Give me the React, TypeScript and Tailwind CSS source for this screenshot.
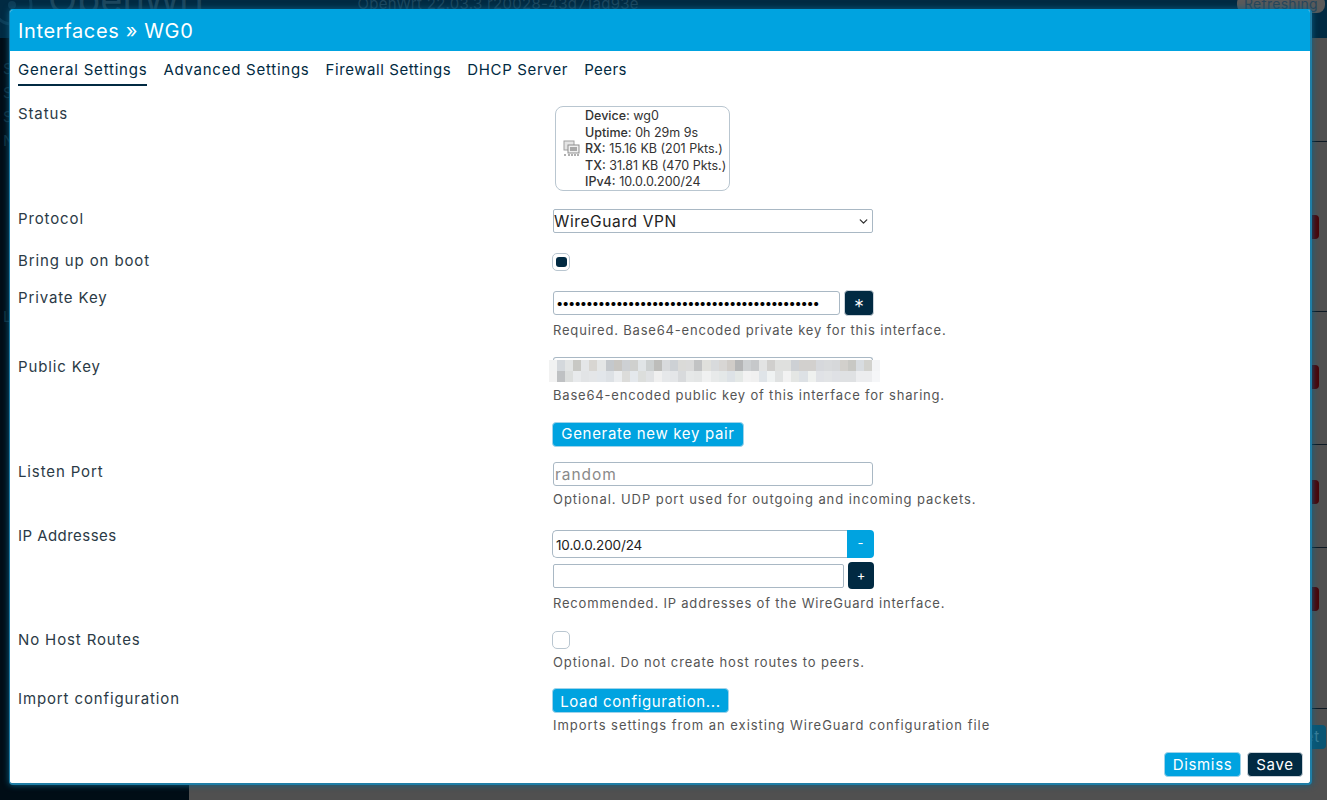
import React from 'react'
import { ChevronDown } from 'lucide-react'

const font = { fontFamily: 'Inter, "Noto Sans", sans-serif' }

const blurTop = ['#f1f2f2','#d4d8dc','#e2e4e4','#c8c8c4','#e4e6e8','#d8d6d2','#e4e6e6','#c4c8cc','#c8c6c2','#cdd0d3','#cfd0ce','#e0e4e6','#ccd0d0','#bdbdba','#d8dadc','#cdd1d5','#dadad8','#dadada','#c2c3c4','#e0e0dc','#d8dadc','#d8d6d4','#d0ccc8','#b4b5b6','#cdd0d2','#c6c8ca','#e2e3e3','#d0cfcd','#dfe0de','#dfe0de','#cdd0d4','#d2d0ce','#d2d0ce','#d6d8dc','#d8dadc','#d6d8da','#d2d0cc','#c8c8c4','#d8dce0','#d2d2ce','#f3f4f6']
const blurBottom = ['#f2f2f2','#bfc1c3','#dcdedd','#e8eaec','#e2e4e6','#e4e6e8','#e2e6ea','#dde1e5','#ebedef','#dcdcda','#e4e8ec','#dcdedc','#e0e2e4','#f0f0f0','#e6e8ea','#e4e6e8','#d8dadc','#e6e8e8','#e4e6e6','#f0f1f1','#e8eaea','#e4e8e8','#dde2e6','#e4e8e6','#f2f2f2','#f0f0f0','#dfe4e8','#eff2f2','#e0e2e2','#f2f2f2','#e4e6e4','#dde1e5','#eff1ef','#e0e2e6','#e2e4e6','#dfe1e5','#dfe1e3','#dfe1e3','#ecedef','#ecedef','#f5f6f8']

type RowProps = { label?: React.ReactNode, labelClass?: string, className?: string, children: React.ReactNode }

function Row({ label, labelClass, className, children }: RowProps) {
  return (
    <div className={`flex ${className ?? ''}`}>
      <div className={`w-[535px] shrink-0 text-[15px] leading-5 tracking-[0.058em] text-[#2b3a46] ${labelClass ?? ''}`}>{label}</div>
      <div className="flex-1">{children}</div>
    </div>
  )
}

function Help({ children, className }: { children: React.ReactNode, className?: string }) {
  return <div className={`h-5 text-[13px] leading-5 tracking-[0.062em] text-[#555] ${className ?? 'mt-1'}`}>{children}</div>
}

function BlueButton({ children, className }: { children: React.ReactNode, className?: string }) {
  return (
    <button className={`-ml-px flex h-[25px] items-center justify-center rounded-[4px] border border-[#9fd3ea] bg-[#00a3e0] text-[15px] tracking-[0.045em] text-white ${className ?? ''}`}>
      {children}
    </button>
  )
}

function DeviceIcon() {
  return (
    <svg width="17" height="17" viewBox="0 0 17 17" className="shrink-0">
      <rect x="1" y="1" width="10" height="9" fill="#e4e4e4" stroke="#a0a0a0" />
      <rect x="5" y="5" width="11" height="8" fill="#f0f0f0" stroke="#8e8e8e" />
      <rect x="7" y="7" width="7" height="4" fill="#a8a8a8" />
      <path d="M1 15h2M5 15h11" stroke="#b0b0b0" strokeWidth="2" strokeDasharray="2 1" />
    </svg>
  )
}

function Backdrop() {
  return (
    <div className="flex h-screen w-full flex-col overflow-hidden bg-[#505050]">
      <div className="flex h-[38px] shrink-0 items-start overflow-hidden bg-[#012a42] text-[#1d475e]">
        <svg width="40" height="40" viewBox="0 0 40 40" className="-mt-[5px] -ml-[5px] shrink-0">
          <circle cx="17" cy="10" r="19" fill="none" stroke="#0d3d57" strokeWidth="3" />
          <circle cx="17" cy="10" r="4" fill="#0d3d57" />
        </svg>
        <span className="-mt-[23px] ml-[13px] text-[38px] leading-[44px]">OpenWrt</span>
        <span className="-mt-[6px] ml-[151px] text-[15px] leading-5 tracking-[0.02em]">OpenWrt 22.03.3 r20028-43d71ad93e</span>
        <span className="-mt-[5px] ml-auto mr-[2px] rounded-[8px] bg-[#5a5a5a] px-[7px] text-[14px] leading-[18px] tracking-[0.02em] text-[#27465a]">Refreshing</span>
      </div>
      <div className="flex min-h-0 flex-1">
        <div className="w-[189px] shrink-0 bg-[#000d16] pt-[19px] pl-[3px] text-[15px] leading-[24px] text-[#12303f]">
          <div>Status</div>
          <div>System</div>
          <div>Services</div>
          <div>Network</div>
          <div className="mt-[152px]">Logout</div>
        </div>
        <div className="flex flex-1 flex-col">
          <div className="h-[104px] border-b border-[#0d1a24]" />
          <div className="flex h-[170px] items-start justify-end border-b border-[#0d1a24] pt-[73px] pr-[8px]">
            <span className="h-[24px] w-[16px] rounded-[4px] bg-[#4a0508]" />
          </div>
          <div className="flex h-[133px] items-start justify-end border-b border-[#0d1a24] pt-[53px] pr-[8px]">
            <span className="h-[24px] w-[16px] rounded-[4px] bg-[#4a0508]" />
          </div>
          <div className="flex h-[103px] items-start justify-end border-b border-[#0d1a24] pt-[35px] pr-[8px]">
            <span className="h-[24px] w-[16px] rounded-[4px] bg-[#4a0508]" />
          </div>
          <div className="flex h-[161px] items-start justify-end border-b border-[#0d1a24] pt-[39px] pr-[8px]">
            <span className="h-[24px] w-[16px] rounded-[4px] bg-[#4a0508]" />
          </div>
          <div className="flex justify-end pt-[16px] pr-px">
            <span className="flex h-[24px] w-[60px] items-center justify-end rounded-[4px] bg-[#0a5573] pr-[6px] text-[15px] tracking-[0.05em] text-[#3c7f99]">Reset</span>
          </div>
        </div>
      </div>
    </div>
  )
}

export default function App() {
  return (
    <div className="relative h-screen w-full overflow-hidden" style={font}>
      <Backdrop />
      <div className="absolute top-[9px] left-[9px] flex h-[776px] w-[1303px] flex-col overflow-hidden rounded-[4px] border border-r-2 border-b-2 border-[#1f7ea6] border-t-[#00a3e0] bg-white shadow-[0_0_6px_#0a5f85]">
        <div className="flex h-[41px] shrink-0 items-center bg-[#00a3e0] pl-[8px] text-[20px] tracking-[0.032em] text-white">
          Interfaces » WG0
        </div>
        <div className="flex h-[35px] shrink-0 gap-4 pl-[8px] text-[15px] text-[#012a42]">
          <div className="h-[35px] border-b-2 border-[#012a42] pt-[9px] leading-5 tracking-[0.052em]">General Settings</div>
          <div className="pt-[9px] leading-5 tracking-[0.05em]">Advanced Settings</div>
          <div className="pt-[9px] leading-5 tracking-[0.038em]">Firewall Settings</div>
          <div className="pt-[9px] leading-5 tracking-[0.045em]">DHCP Server</div>
          <div className="pt-[9px] leading-5 tracking-[0.03em]">Peers</div>
        </div>

        <div className="mt-5 flex flex-1 flex-col pl-[8px]">
          <Row label="Status" labelClass="-mt-[2px]" className="mb-[18px]">
            <div className="ml-[2px] flex h-[85px] w-[175px] items-center gap-[5px] rounded-[8px] border border-[#b9c6d0] pl-[7px]">
              <DeviceIcon />
              <div className="pt-[2px] text-[12.5px] leading-[16.4px] whitespace-nowrap text-[#333]">
                <div><b className="font-medium">Device:</b> wg0</div>
                <div><b className="font-medium">Uptime:</b> 0h 29m 9s</div>
                <div><b className="font-medium">RX:</b> 15.16 KB (201 Pkts.)</div>
                <div><b className="font-medium">TX:</b> 31.81 KB (470 Pkts.)</div>
                <div><b className="font-medium">IPv4:</b> 10.0.0.200/24</div>
              </div>
            </div>
          </Row>

          <Row label="Protocol" className="mb-5">
            <div className="relative h-6 w-[320px]">
              <select className="h-6 w-full appearance-none rounded-[2px] border border-[#a9b8c4] text-[15.5px] tracking-[0.04em] text-[#222]" defaultValue="wg">
                <option value="wg">WireGuard VPN</option>
              </select>
              <ChevronDown size={13} strokeWidth={2.5} className="absolute top-[6px] right-[3px] text-[#333]" />
            </div>
          </Row>

          <Row label="Bring up on boot" labelClass="-mt-[2px]" className="mb-[19px]">
            <div className="-ml-px flex h-[18px] w-[18px] items-center justify-center rounded-[5px] border border-[#b9c6d0]">
              <span className="h-[10px] w-[11px] rounded-[3px] bg-[#012a42]" />
            </div>
          </Row>

          <Row label="Private Key" labelClass="-mt-[2px]" className="mb-[17px]">
            <div className="flex h-[26px] items-center gap-1">
              <input type="password" readOnly value="xxxxxxxxxxxxxxxxxxxxxxxxxxxxxxxxxxxxxxxxxxxx" className="h-[24px] w-[287px] rounded-[3px] border border-[#a9b8c4] pl-[2px] text-[13px] tracking-[-1.35px] text-black" />
              <button className="flex h-[26px] w-[30px] items-center justify-center rounded-[4px] border border-[#cbd3da] bg-[#012a42] text-[20px] leading-none font-light text-white">
                <span className="mt-[7px]">*</span>
              </button>
            </div>
            <Help>Required. Base64-encoded private key for this interface.</Help>
          </Row>

          <Row label="Public Key" className="mb-[17px]">
            <div className="relative h-6 w-[320px] rounded-[3px] border-x border-t border-[#a9b8c4]">
              <div className="absolute top-[2px] -left-[5px] w-[331px]">
                <div className="flex h-[11px]">
                  {blurTop.map((c, i) => <span key={i} className="h-full flex-1" style={{ backgroundColor: c }} />)}
                </div>
                <div className="flex h-[11px]">
                  {blurBottom.map((c, i) => <span key={i} className="h-full flex-1" style={{ backgroundColor: c }} />)}
                </div>
              </div>
            </div>
            <Help>Base64-encoded public key of this interface for sharing.</Help>
          </Row>

          <Row className="mb-[15px]">
            <BlueButton className="w-[192px]">Generate new key pair</BlueButton>
          </Row>

          <Row label="Listen Port" className="mb-[21px]">
            <input readOnly placeholder="random" className="h-6 w-[320px] rounded-[3px] border border-[#a9b8c4] pt-px pl-[1px] text-[15.5px] tracking-[0.06em] placeholder:text-[#8a8a8a]" />
            <Help className="mt-[3px]"><span className="tracking-[0.072em]">Optional. UDP port used for outgoing and incoming packets.</span></Help>
          </Row>

          <Row label={<span className="tracking-[0.03em]">IP Addresses</span>} labelClass="-mt-[4px]" className="mb-[18px]">
            <div className="-ml-px flex h-7 w-[322px]">
              <input readOnly value="10.0.0.200/24" className="h-7 flex-1 rounded-l-[5px] border border-r-0 border-[#a9b8c4] pt-px pl-[3px] text-[13.5px] tracking-[-0.01em] text-[#222]" />
              <button className="flex h-7 w-[27px] items-center justify-center rounded-r-[4px] bg-[#00a3e0] text-[13px] text-white">-</button>
            </div>
            <div className="mt-1 flex h-[27px] items-center gap-1">
              <input readOnly className="h-6 w-[291px] rounded-[2px] border border-[#a9b8c4]" />
              <button className="flex h-[27px] w-[26px] items-center justify-center rounded-[4px] bg-[#012a42] text-[13px] text-white">+</button>
            </div>
            <Help className="mt-[4px]">Recommended. IP addresses of the WireGuard interface.</Help>
          </Row>

          <Row label="No Host Routes" labelClass="-mt-[1px]" className="mb-4">
            <div className="-ml-px h-[18px] w-[18px] rounded-[5px] border border-[#b9c6d0]" />
            <Help className="mt-[3px]"><span className="tracking-[0.068em]">Optional. Do not create host routes to peers.</span></Help>
          </Row>

          <Row label="Import configuration" labelClass="mt-px">
            <BlueButton className="w-[177px] pt-[4px]">Load configuration...</BlueButton>
            <Help className="mt-[2px]"><span className="tracking-[0.074em]">Imports settings from an existing WireGuard configuration file</span></Help>
          </Row>
        </div>

        <div className="flex justify-end gap-[6px] pr-[7px] pb-[6px]">
          <BlueButton className="w-[77px] pt-[2px]">Dismiss</BlueButton>
          <button className="flex h-[25px] w-[56px] items-center justify-center rounded-[4px] border border-[#cbd3da] bg-[#012a42] pt-[2px] text-[15px] tracking-[0.05em] text-white">Save</button>
        </div>
      </div>
    </div>
  )
}
